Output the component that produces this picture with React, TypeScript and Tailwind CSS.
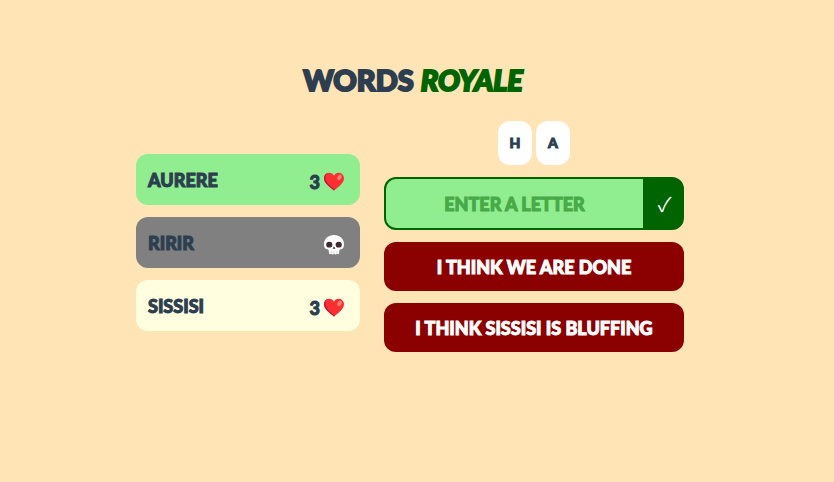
import { useState } from "react";

type Player = { name: string; lives: number; tone: string };

const players: Player[] = [
  { name: "AURERE", lives: 3, tone: "bg-[#90ee90]" },
  { name: "RIRIR", lives: 0, tone: "bg-[#808080]" },
  { name: "SISSISI", lives: 3, tone: "bg-[#ffffe0]" },
];

const letters = ["H", "A"];

function Heart() {
  return (
    <svg viewBox="0 0 20 20" className="size-5" role="img" aria-label="lives">
      <path
        d="M10 18.6C8.4 17 5 14.6 2.6 11.9C.6 9.7-.2 7.5.1 5.2C.6 2.5 2.7.7 5.2.7C7.3.7 9.1 1.9 10 3.7C10.9 1.9 12.7.7 14.8.7C17.3.7 19.4 2.5 19.9 5.2C20.2 7.5 19.4 9.7 17.4 11.9C15 14.6 11.6 17 10 18.6Z"
        fill="#fa2f2f"
      />
      <path
        d="M10 18.6C8.4 17 5 14.6 2.6 11.9C.6 9.7-.2 7.5.1 5.2C.5 3.1 1.8 1.6 3.5 1C1.6 2.8 1 5.2 1.7 7.6C2.9 11.5 6.8 14.8 10.9 17.8Z"
        fill="#ca0b4a"
      />
      <ellipse cx="15.5" cy="5.3" rx="1.9" ry="3" transform="rotate(28 15.5 5.3)" fill="#ff7e78" />
    </svg>
  );
}

function Skull() {
  return (
    <svg viewBox="0 0 20 20" className="size-5" role="img" aria-label="eliminated">
      <path
        d="M10 0C4.3 0 0 3.8 0 9C0 11 .3 12.5 1.4 13.6C2.4 14.4 4 14.1 4.6 15L5 18.3C5.2 19.4 6.5 19.4 7 18.6C7.5 19.7 9.2 19.8 10 18.7C10.8 19.8 12.5 19.7 13 18.6C13.5 19.4 14.8 19.4 15 18.3L15.4 15C16 14.1 17.6 14.4 18.6 13.6C19.7 12.5 20 11 20 9C20 3.8 15.7 0 10 0Z"
        fill="#ffffff"
      />
      <ellipse cx="5.3" cy="9.7" rx="3.1" ry="2.9" fill="#402a32" />
      <ellipse cx="14.7" cy="9.7" rx="3.1" ry="2.9" fill="#402a32" />
      <path d="M10 11.6L11.4 13.5Q10.6 14.2 10 13.5Q9.4 14.2 8.6 13.5Z" fill="#402a32" />
      <path d="M7.2 16V18.6M10 16V18.7M12.8 16V18.6" stroke="#c5b9bf" strokeWidth=".6" />
    </svg>
  );
}

function PlayerRow({ name, lives, tone }: Player) {
  return (
    <li className={`flex h-[51px] items-center justify-between rounded-xl pr-4 pl-3 ${tone}`}>
      <span>{name}</span>
      <span className="flex items-center gap-1 pt-1">
        {lives > 0 && <span>{lives}</span>}
        {lives > 0 ? <Heart /> : <Skull />}
      </span>
    </li>
  );
}

function Accuse({ children }: { children: string }) {
  return (
    <button type="button" className="h-[49px] rounded-xl bg-[#8b0000] whitespace-nowrap text-white uppercase">
      {children}
    </button>
  );
}

export default function App() {
  const [letter, setLetter] = useState("");

  return (
    <main className="min-h-screen bg-[#ffe4b5] pt-15 pr-3.5 font-['Lato',sans-serif] text-lg font-black text-[#2c3e50] [-webkit-text-stroke:1px]">
      <h1 className="pl-1.5 text-center text-[29px] leading-10 [-webkit-text-stroke:2px]">
        WORDS <em className="text-[#006400]">ROYALE</em>
      </h1>
      <div className="mt-[21px] flex items-center justify-center gap-6">
        <ul className="mt-3 flex w-56 flex-col gap-3">
          {players.map((player) => (
            <PlayerRow key={player.name} {...player} />
          ))}
        </ul>
        <section className="flex w-75 flex-col gap-3">
          <div className="flex justify-center gap-1">
            {letters.map((l) => (
              <span key={l} className="flex h-11 w-[34px] items-center justify-center rounded-xl bg-white text-sm">
                {l}
              </span>
            ))}
          </div>
          <form
            className="flex h-[53px] rounded-xl border-2 border-[#006400] bg-[#006400]"
            onSubmit={(e) => e.preventDefault()}
          >
            <input
              aria-label="Enter a letter"
              value={letter}
              onChange={(e) => setLetter(e.target.value)}
              placeholder="ENTER A LETTER"
              className="min-w-0 flex-1 rounded-l-[10px] bg-[#90ee90] text-center outline-none placeholder:text-[#48a948]"
            />
            <button
              type="submit"
              aria-label="Submit"
              className="w-[39px] pl-1 font-['Noto_Sans_CJK_JP',sans-serif] text-xl font-normal text-white [-webkit-text-stroke:0]"
            >
              ✓
            </button>
          </form>
          <Accuse>I think we are done</Accuse>
          <Accuse>I think SISSISI is bluffing</Accuse>
        </section>
      </div>
    </main>
  );
}
